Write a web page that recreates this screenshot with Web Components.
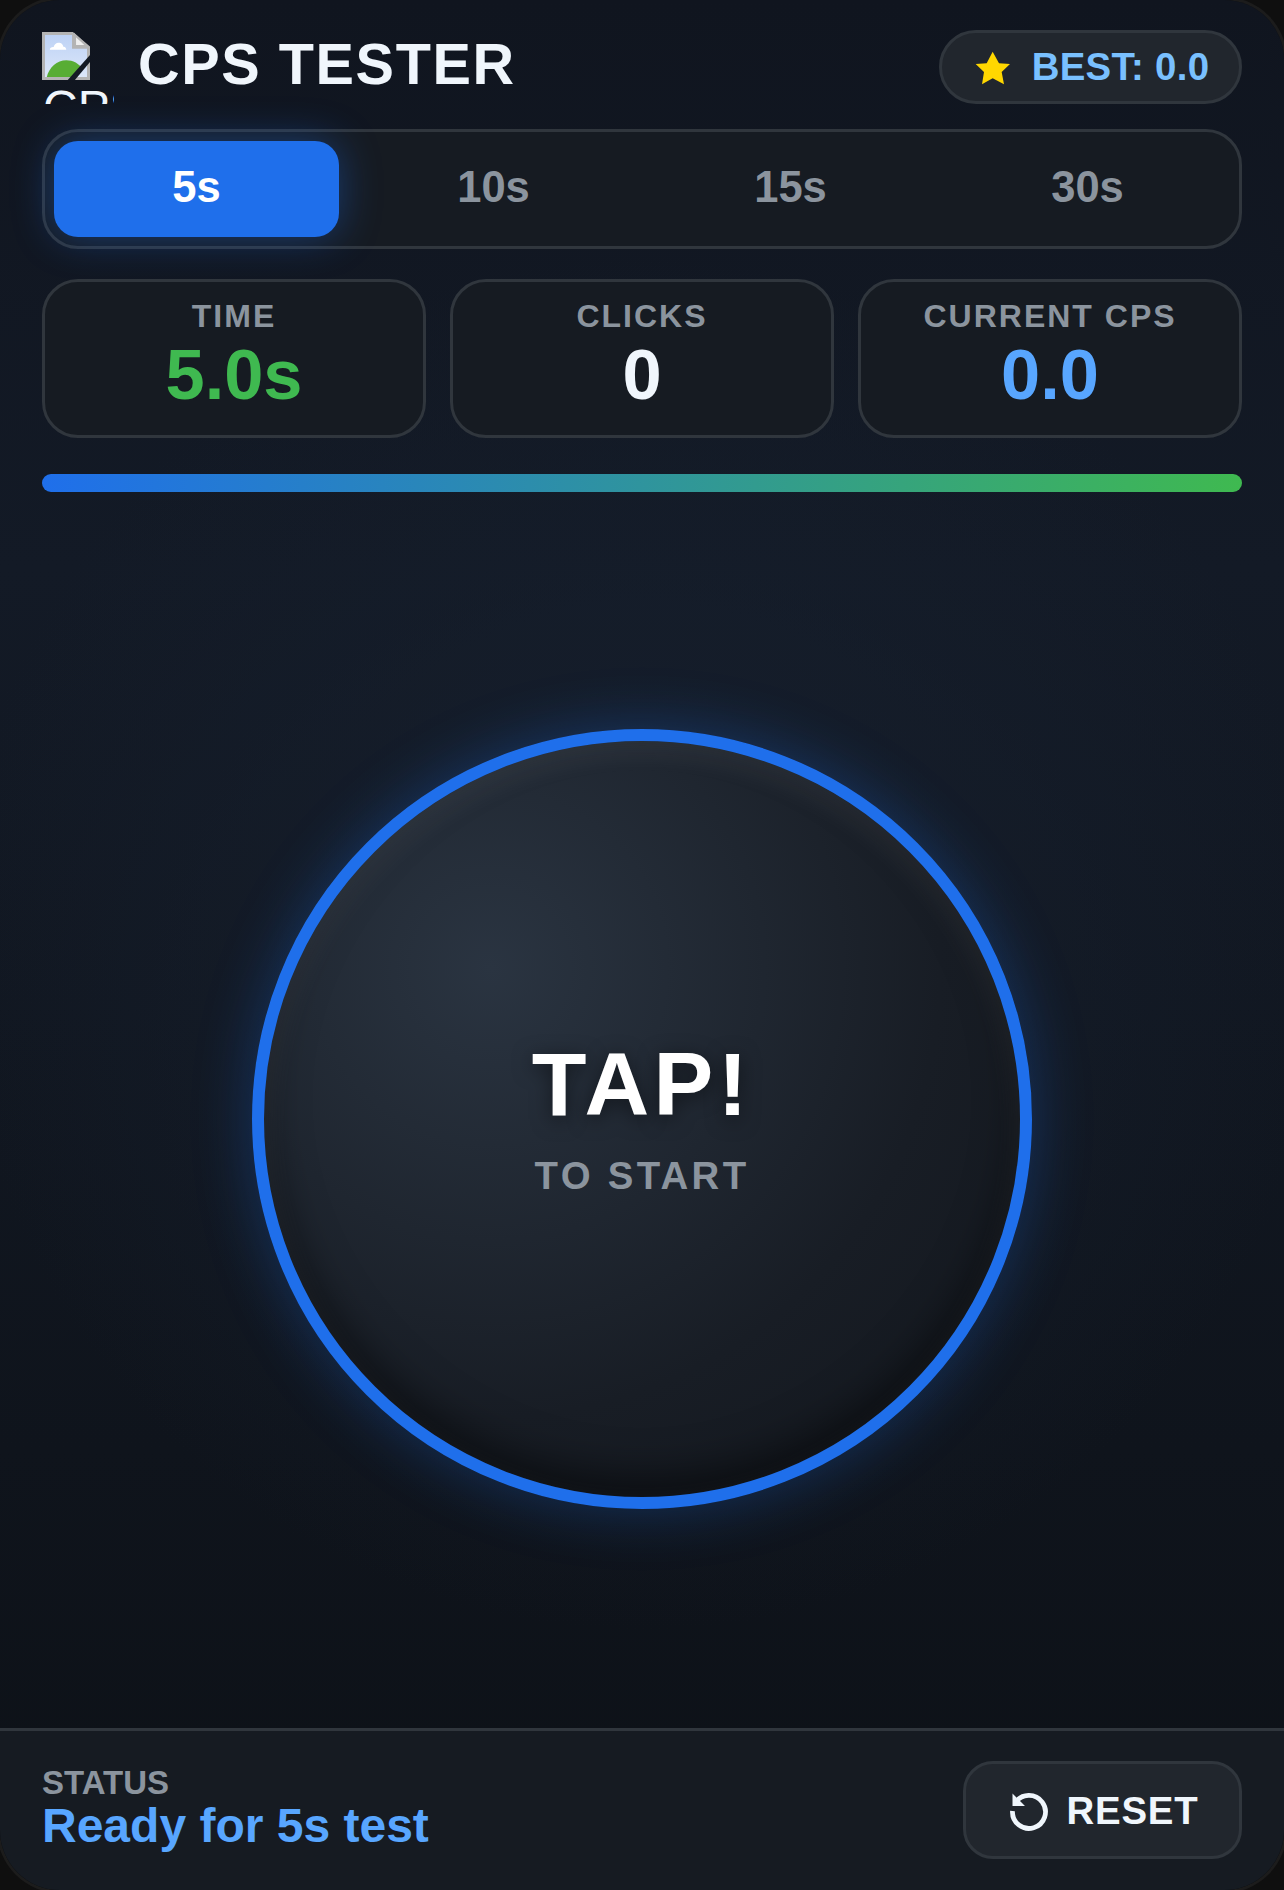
<!DOCTYPE html>
<html lang="en"><head><meta charset="utf-8"><title>CPS Tester</title>
<style>
html,body{margin:0;padding:0;background:#0f0f0f;}
body{width:1284px;height:1890px;font-family:"Liberation Sans",Arial,sans-serif;color:#f0f6fc;overflow:hidden}
</style></head><body>
<cps-app>
  <cps-header slot="top" best="0.0"></cps-header>
  <cps-tabs slot="top"><cps-tab active>5s</cps-tab><cps-tab>10s</cps-tab><cps-tab>15s</cps-tab><cps-tab>30s</cps-tab></cps-tabs>
  <cps-stats slot="top">
    <cps-stat label="TIME" color="#3fb950">5.0s</cps-stat>
    <cps-stat label="CLICKS" color="#f0f6fc">0</cps-stat>
    <cps-stat label="CURRENT CPS" color="#58a6ff">0.0</cps-stat>
  </cps-stats>
  <cps-progress slot="top"></cps-progress>
  <cps-tap slot="main"></cps-tap>
  <cps-footer slot="bottom"></cps-footer>
</cps-app>
<script>
function def(name, html){
  customElements.define(name, class extends HTMLElement{
    constructor(){super();this.attachShadow({mode:'open'}).innerHTML=typeof html==='function'?html(this):html;}
  });
}
def('cps-app',`<style>
:host{display:flex;flex-direction:column;box-sizing:border-box;width:1284px;height:1890px;border-radius:60px;position:relative;
background:radial-gradient(circle at 50% 50%,#161f2d 0%,rgba(22,31,45,0) 60%),linear-gradient(180deg,#10151f 0%,#131a26 30%,#0d1117 100%);box-shadow:0 0 0 3px #1c1c1c}
.top{display:flex;flex-direction:column;padding:30px 42px 0;}
.main{flex:1;display:flex;align-items:center;justify-content:center;min-height:0;padding-top:17px}
</style><div class="top"><slot name="top"></slot></div><div class="main"><slot name="main"></slot></div><slot name="bottom"></slot>`);
def('cps-header',`<style>
:host{display:flex;align-items:flex-start;justify-content:space-between;height:74px}
.l{display:flex;align-items:center;gap:24px;height:72px;margin-top:2px}
.img{width:72px;height:72px;overflow:hidden;display:block;font-size:48px;font-weight:400;line-height:55px;color:#f0f6fc;white-space:nowrap;flex:none}
.img svg{display:block;width:48px;height:48px}
.alt{display:block;margin-left:1px}
h1{margin:0;font-size:57.6px;line-height:64px;font-weight:700;letter-spacing:1.6px;color:#f0f6fc;margin-top:-8px}
.best{box-sizing:border-box;width:303px;height:74px;border:3px solid #30363d;border-radius:37px;background:#21262d;display:flex;align-items:center;justify-content:center;gap:21px;padding-left:3px;font-weight:700;font-size:38.4px;letter-spacing:.3px;color:#79c0ff}
.best svg{width:36px;height:36px;display:block;flex:none;margin-top:2px}
</style><div class="l"><span class="img"><svg viewBox="0 0 16 16"><defs><linearGradient id="sky" x1="0" y1="0" x2="0" y2="1"><stop offset="0" stop-color="#bdd2f5"/><stop offset="1" stop-color="#dce7f9"/></linearGradient></defs><path fill="#b4b4b4" d="M0 0h10.300L16 4.800V16H0z"/><path fill="url(#sky)" d="M1 1h9v4.600h5V15H1z"/><path fill="#eeeeee" stroke="#b4b4b4" stroke-width=".7" d="M11 1 15 4.700H11z"/><path fill="#fff" d="M2.600 5.900c0-.7.700-1 1.300-.9.200-1 1.200-1.700 2.200-1.300.600.200.900.700 1 1.200.6-.1 1 .5 1 1z"/><path fill="#58ad34" d="M1.600 15C2.300 11.800 5 9.400 8.100 9.400c2.200 0 4.300 1.100 5.500 3L11.500 15z"/><path fill="#141a24" d="M16.200 7.400V9.800L10.800 16.200H8.400z"/></svg><span class="alt">CPS</span></span><h1>CPS TESTER</h1></div>
<div class="best"><svg viewBox="45 30 108 108"><path fill="#ffd700" d="M98 35 117 70 150 72 125 96 132 133 98 115 66 133 72 96 47 72 80 70Z"/></svg><span>BEST: 0.0</span></div>`);
def('cps-tabs',`<style>
:host{display:flex;box-sizing:border-box;height:120px;margin-top:25px;padding:9px;border:3px solid #30363d;border-radius:36px;background:#161b22;gap:12px}
</style><slot></slot>`);
def('cps-tab',`<style>
:host{flex:1;display:flex;align-items:center;justify-content:center;box-sizing:border-box;height:96px;padding-bottom:3px;border-radius:24px;font-weight:700;font-size:43.500px;color:#8b949e}
:host([active]){background:#1f6feb;color:#fff;box-shadow:0 0 40px rgba(31,111,235,.4)}
</style><slot></slot>`);
def('cps-stats',`<style>
:host{display:grid;grid-template-columns:repeat(3,1fr);gap:24px;margin-top:30px}
</style><slot></slot>`);
def('cps-stat',el=>`<style>
:host{display:flex;flex-direction:column;align-items:center;box-sizing:border-box;height:159px;border:3px solid #30363d;border-radius:36px;background:#161b22;padding-top:16px}
.k{font-size:32px;line-height:36px;font-weight:700;color:#8b949e;letter-spacing:2px}
.v{font-size:70.400px;line-height:82px;font-weight:700;color:${el.getAttribute('color')}}
</style><div class="k">${el.getAttribute('label')}</div><div class="v"><slot></slot></div>`);
def('cps-progress',`<style>
:host{display:block;height:18px;margin-top:36px;border-radius:9px;background:linear-gradient(90deg,#1f6feb,#3fb950)}
</style>`);
def('cps-tap',`<style>
:host{display:flex;flex-direction:column;align-items:center;justify-content:center;box-sizing:border-box;width:780px;height:780px;border-radius:50%;border:12px solid #1f6feb;padding-bottom:6px;
background:radial-gradient(circle at 30% 30%,#2a3441 0%,#181d25 60%,#12161c 100%);
box-shadow:0 0 60px rgba(31,111,235,.3),inset 0 10px 30px rgba(255,255,255,.08),inset 0 -20px 40px rgba(0,0,0,.5)}
.a{font-size:89.600px;line-height:104px;font-weight:700;letter-spacing:4.480px;color:#fff;text-shadow:0 4px 20px rgba(0,0,0,.5);margin-top:-2px}
.b{font-size:38.400px;line-height:44px;font-weight:700;letter-spacing:3.300px;color:#8b949e;margin-top:18px}
</style><div class="a">TAP!</div><div class="b">TO START</div>`);
def('cps-footer',`<style>
:host{display:flex;align-items:center;justify-content:space-between;box-sizing:border-box;height:162px;border-top:3px solid #30363d;background:#161b22;padding:0 42px;border-radius:0 0 60px 60px}
.k{font-size:33px;line-height:36px;font-weight:700;color:#8b949e;margin-top:-6px}
.v{font-size:48px;line-height:50px;font-weight:700;color:#58a6ff}
.r{box-sizing:border-box;width:279px;height:98px;margin-top:-1px;padding-top:1px;border:3px solid #30363d;border-radius:30px;background:#21262d;display:flex;align-items:center;justify-content:center;gap:16px;font-size:38.400px;letter-spacing:.8px;font-weight:700;color:#f0f6fc}
.r svg{width:44px;height:44px;display:block}
</style><div><div class="k">STATUS</div><div class="v">Ready for 5s test</div></div>
<div class="r"><svg viewBox="0 0 24 24" fill="none" stroke="#f0f6fc" stroke-width="2.600"><path d="M4.500 7.500A9 9 0 1 1 3 12"/><path fill="#f0f6fc" stroke="none" d="M3 2.500v6.800h6.800L7.500 7z"/></svg><span>RESET</span></div>`);
</script>
</body></html>
